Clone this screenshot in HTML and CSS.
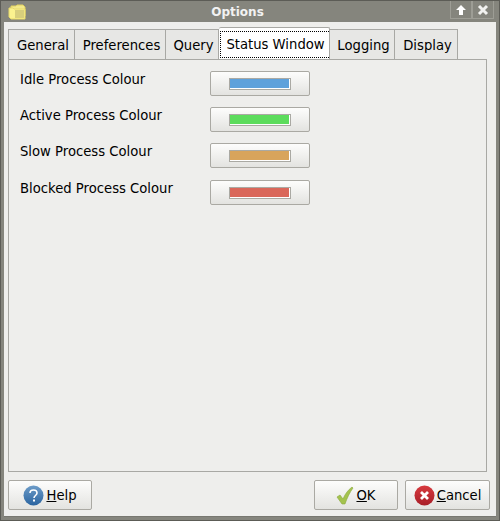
FILE: index.html
```html
<!DOCTYPE html>
<html lang="en">
<head>
    <meta charset="UTF-8">
    <title>Options</title>
    <link rel="stylesheet" href="styles.css">
</head>
<body>
    <div class="window">
        <div class="titlebar">
            <svg class="app-icon" width="20" height="18" viewBox="0 0 20 18">
                <path d="M3 3h5l1-1h6l2 2v9H3z" fill="#f3e98a" stroke="#e0d060" stroke-width="1"/>
                <path d="M1 5h4l1 1h11v10H3l-2-2z" fill="#fbf28f" stroke="#e6d86a" stroke-width="1"/>
                <path d="M7 8h9M7 10h9M7 12h9M7 14h9" stroke="#b5ab6a" stroke-width="1"/>
            </svg>
            <span class="title">Options</span>
            <div class="title-buttons">
                <div class="title-btn">
                    <svg width="14" height="14" viewBox="0 0 14 14"><path d="M7 2l5 5H9v5H5V7H2z" fill="#fff"/></svg>
                </div>
                <div class="title-btn">
                    <svg width="14" height="14" viewBox="0 0 14 14"><path d="M3 3l8 8M11 3l-8 8" stroke="#f2f2f0" stroke-width="3"/></svg>
                </div>
            </div>
        </div>
        <div class="content">
            <div class="tabs">
                <div class="tab tab-general">General</div>
                <div class="tab tab-prefs">Preferences</div>
                <div class="tab tab-query">Query</div>
                <div class="tab tab-status active"><span class="focus">Status Window</span></div>
                <div class="tab tab-logging">Logging</div>
                <div class="tab tab-display">Display</div>
            </div>
            <div class="panel">
                <div class="row">
                    <span class="row-label">Idle Process Colour</span>
                    <button class="colour-button"><span class="swatch idle"></span></button>
                </div>
                <div class="row">
                    <span class="row-label">Active Process Colour</span>
                    <button class="colour-button"><span class="swatch active-proc"></span></button>
                </div>
                <div class="row row-wide">
                    <span class="row-label">Slow Process Colour</span>
                    <button class="colour-button"><span class="swatch slow"></span></button>
                </div>
                <div class="row">
                    <span class="row-label">Blocked Process Colour</span>
                    <button class="colour-button"><span class="swatch blocked"></span></button>
                </div>
            </div>
            <div class="footer">
                <button class="dlg-button help">
                    <svg width="21" height="21" viewBox="0 0 21 21">
                        <defs>
                            <linearGradient id="blue" x1="0" y1="0" x2="0" y2="1">
                                <stop offset="0" stop-color="#6d9cc8"/>
                                <stop offset="1" stop-color="#2a64a0"/>
                            </linearGradient>
                        </defs>
                        <circle cx="10.5" cy="10.5" r="10" fill="url(#blue)"/>
                        <path d="M7 8c0-2 1.500-3 3.500-3s3.500 1.200 3.500 3c0 2.500-3 2.500-3 5" fill="none" stroke="#fff" stroke-width="1.600"/>
                        <rect x="10" y="14.500" width="2" height="2" fill="#fff"/>
                    </svg>
                    <span><u>H</u>elp</span>
                </button>
                <div class="spacer"></div>
                <button class="dlg-button ok">
                    <svg width="18" height="19" viewBox="0 0 18 19">
                        <path d="M1 11l3-2 3 4c2-5 5-9 9-12l1 1c-3 4-6 10-8 16H6z" fill="#a4c34e" stroke="#8aa83c" stroke-width=".6"/>
                    </svg>
                    <span><u>O</u>K</span>
                </button>
                <button class="dlg-button cancel">
                    <svg width="21" height="21" viewBox="0 0 21 21">
                        <defs>
                            <linearGradient id="red" x1="0" y1="0" x2="0" y2="1">
                                <stop offset="0" stop-color="#d83a3e"/>
                                <stop offset="1" stop-color="#a81f28"/>
                            </linearGradient>
                        </defs>
                        <circle cx="10.500" cy="10.500" r="10" fill="url(#red)"/>
                        <path d="M7 7l7 7M14 7l-7 7" stroke="#fff" stroke-width="2.800"/>
                    </svg>
                    <span><u>C</u>ancel</span>
                </button>
            </div>
        </div>
    </div>
</body>
</html>
```

FILE: styles.css
```css
html, body {
    margin: 0;
    height: 100%;
}
body {
    font-family: "DejaVu Sans", sans-serif;
    font-size: 13.2px;
    color: #000;
    background: #85857d;
}
.window {
    box-sizing: border-box;
    width: 500px;
    height: 521px;
    display: flex;
    flex-direction: column;
    background: #85857d;
    border: 1px solid #5c5c56;
    padding: 0 3px 3px 3px;
}
.titlebar {
    height: 21px;
    display: flex;
    align-items: center;
    position: relative;
    flex: none;
}
.app-icon {
    margin-left: 4px;
}
.title {
    position: absolute;
    left: 0;
    right: 25px;
    top: 4px;
    text-align: center;
    color: #f2f2f2;
    font-weight: bold;
    font-size: 12px;
}
.title-buttons {
    margin-left: auto;
    display: flex;
    align-self: flex-start;
    margin-right: 2px;
}
.title-btn {
    width: 22px;
    height: 18px;
    display: flex;
    align-items: center;
    justify-content: center;
    border: 1px solid #9d9d95;
    border-top: none;
    box-sizing: border-box;
}
.content {
    flex: 1;
    display: flex;
    flex-direction: column;
    background: #eeeeec;
    padding: 6px 5px 6px 4px;
    border: 1px solid #777770;
    border-width: 0 0 1px 0;
}
.tabs {
    display: flex;
    align-items: flex-end;
    height: 31px;
    flex: none;
    position: relative;
    z-index: 1;
}
.tab {
    box-sizing: border-box;
    height: 30px;
    padding: 1px 0 0 3px;
    display: flex;
    align-items: center;
    justify-content: center;
    background: #e7e7e5;
    border: 1px solid #a8a8a4;
    border-left: none;
    border-bottom: none;
    white-space: nowrap;
}
.tab:first-child {
    border-left: 1px solid #a8a8a4;
}
.tab-general { width: 67px; }
.tab-prefs { width: 91px; }
.tab-query { width: 53px; }
.tab-status { width: 111px; }
.tab-logging { width: 65px; }
.tab-display { width: 63px; }
.active {
    height: 32px;
    background: #fff;
    border-top-left-radius: 2px;
    border-top-right-radius: 2px;
}
.focus {
    outline: 1px dotted #000;
    padding: 5px;
}
.panel {
    flex: 1;
    margin-right: 0;
    width: 479px;
    box-sizing: border-box;
    border: 1px solid #a8a8a4;
    padding: 11px 0 0 11px;
    display: flex;
    flex-direction: column;
    gap: 11px;
}
.row {
    display: flex;
    height: 25px;
}
.row-wide {
    margin-bottom: 1px;
}
.row-label {
    width: 190px;
    line-height: 18px;
}
.colour-button {
    box-sizing: border-box;
    width: 100px;
    height: 25px;
    padding: 0;
    display: flex;
    align-items: center;
    justify-content: center;
    background: linear-gradient(#fdfdfc, #e3e3e0);
    border: 1px solid #aaa9a3;
    border-radius: 2px;
}
.swatch {
    display: block;
    box-sizing: border-box;
    width: 62px;
    height: 12px;
    border: 1px solid;
    border-color: #aaa9a3;
    box-shadow: inset -1px -1px 0 #fff;
}
.idle { background: #5ea1db; }
.active-proc { background: #5cdc5c; }
.slow { background: #d8a45c; }
.blocked { background: #da675a; }
.footer {
    flex: none;
    display: flex;
    gap: 7px;
    margin-top: 8px;
    width: 482px;
}
.spacer {
    flex: 1;
}
.dlg-button {
    box-sizing: border-box;
    height: 30px;
    width: 84px;
    padding: 0;
    display: flex;
    align-items: center;
    justify-content: center;
    gap: 2px;
    background: linear-gradient(#fdfdfc, #e3e3e0);
    border: 1px solid #aaa9a3;
    border-radius: 2px;
    font-family: "DejaVu Sans", sans-serif;
    font-size: 13.2px;
    color: #000;
}
.cancel {
    width: 85px;
}
```
